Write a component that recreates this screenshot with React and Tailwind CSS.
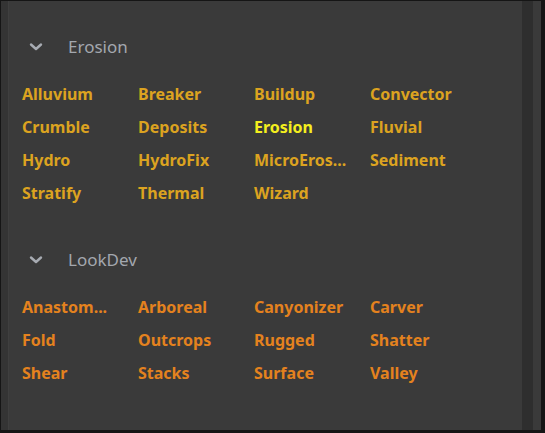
import React from 'react'

const groups = [
  {
    title: 'Erosion',
    color: 'text-[#dca320]',
    items: ['Alluvium', 'Breaker', 'Buildup', 'Convector', 'Crumble', 'Deposits', 'Erosion', 'Fluvial', 'Hydro', 'HydroFix', 'MicroEros...', 'Sediment', 'Stratify', 'Thermal', 'Wizard'],
    active: 'Erosion'
  },
  {
    title: 'LookDev',
    color: 'text-[#e4821e]',
    items: ['Anastom...', 'Arboreal', 'Canyonizer', 'Carver', 'Fold', 'Outcrops', 'Rugged', 'Shatter', 'Shear', 'Stacks', 'Surface', 'Valley']
  }
]

const Chevron = () => (
  <svg className="w-[16px] h-[10px] text-[#a7abb2]" viewBox="0 0 16 10" fill="none" stroke="currentColor">
    <path d="M3 2.5l5 4.5 5-4.5" strokeWidth={2.4} strokeLinecap="round" strokeLinejoin="round" />
  </svg>
)

const Section = ({ group, className }) => (
  <div className={className}>
    {/* Header */}
    <div className="flex items-center h-[22px] pl-[19px]">
      <Chevron />
      <span className="ml-[24px] text-[17px] text-[#a3a7ae]">{group.title}</span>
    </div>

    {/* Node grid */}
    <div className="grid grid-cols-[116px_116px_116px_116px] pl-[13px] mt-[25px] gap-y-[11px]">
      {group.items.map((item) => (
        <div
          key={item}
          className={`h-[22px] leading-[22px] text-[16px] font-bold ${item === group.active ? 'text-[#f4ef1e]' : group.color}`}
        >
          {item}
        </div>
      ))}
    </div>
  </div>
)

export default function App() {
  return (
    <div className="w-[545px] h-[433px] bg-[#151515] pt-[1px] pr-[4px] pb-[3px] pl-[1px]" style={{ fontFamily: '"Noto Sans", "Open Sans", sans-serif' }}>
      <div className="flex h-full">
        <div className="w-[8px] bg-[#343434] border-r border-[#3f3f3f]" />
        <div className="flex-1 bg-[#3a3a3a] pt-[35px]">
          <Section group={groups[0]} />
          <Section group={groups[1]} className="mt-[45px]" />
        </div>
        <div className="w-[11px] bg-[#2e2e2e]" />
        <div className="w-[8px] bg-[#3a3a3a]" />
      </div>
    </div>
  )
}
